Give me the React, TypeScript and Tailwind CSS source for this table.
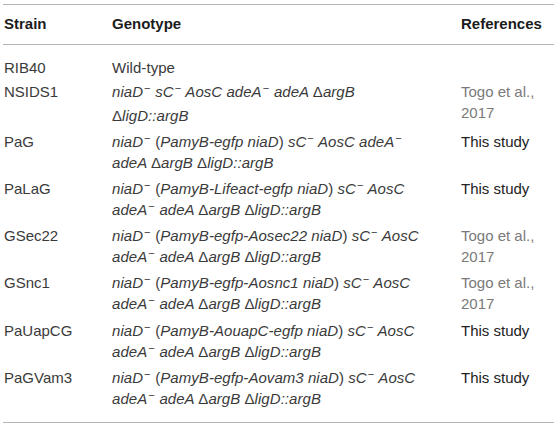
import React from 'react';

const D = () => <span className="not-italic">Δ</span>;
const M = () => (
  <span className="inline-block align-top leading-none text-[11px] not-italic mt-[2px] ml-[1px] mr-[0.5px]">−</span>
);

type Row = {
  strain: string;
  lines: React.ReactNode[];
  ref: 'togo' | 'study' | null;
};

const rows: Row[] = [
  { strain: 'RIB40', lines: [<span className="not-italic">Wild-type</span>], ref: null },
  {
    strain: 'NSIDS1',
    lines: [
      <>niaD<M /> sC<M /> AosC adeA<M /> adeA <D />argB</>,
      <><D />ligD::argB</>,
    ],
    ref: 'togo',
  },
  {
    strain: 'PaG',
    lines: [
      <>niaD<M /> <span className="not-italic">(</span>PamyB-egfp niaD<span className="not-italic">)</span> sC<M /> AosC adeA<M /></>,
      <>adeA <D />argB <D />ligD::argB</>,
    ],
    ref: 'study',
  },
  {
    strain: 'PaLaG',
    lines: [
      <>niaD<M /> <span className="not-italic">(</span>PamyB-Lifeact-egfp niaD<span className="not-italic">)</span> sC<M /> AosC</>,
      <>adeA<M /> adeA <D />argB <D />ligD::argB</>,
    ],
    ref: 'study',
  },
  {
    strain: 'GSec22',
    lines: [
      <>niaD<M /> <span className="not-italic">(</span>PamyB-egfp-Aosec22 niaD<span className="not-italic">)</span> sC<M /> AosC</>,
      <>adeA<M /> adeA <D />argB <D />ligD::argB</>,
    ],
    ref: 'togo',
  },
  {
    strain: 'GSnc1',
    lines: [
      <>niaD<M /> <span className="not-italic">(</span>PamyB-egfp-Aosnc1 niaD<span className="not-italic">)</span> sC<M /> AosC</>,
      <>adeA<M /> adeA <D />argB <D />ligD::argB</>,
    ],
    ref: 'togo',
  },
  {
    strain: 'PaUapCG',
    lines: [
      <>niaD<M /> <span className="not-italic">(</span>PamyB-AouapC-egfp niaD<span className="not-italic">)</span> sC<M /> AosC</>,
      <>adeA<M /> adeA <D />argB <D />ligD::argB</>,
    ],
    ref: 'study',
  },
  {
    strain: 'PaGVam3',
    lines: [
      <>niaD<M /> <span className="not-italic">(</span>PamyB-egfp-Aovam3 niaD<span className="not-italic">)</span> sC<M /> AosC</>,
      <>adeA<M /> adeA <D />argB <D />ligD::argB</>,
    ],
    ref: 'study',
  },
];

export default function App() {
  return (
    <div className="w-[559px] h-[427px] bg-white pt-[4px] pl-[3px] font-['Liberation_Sans',Arial,sans-serif] text-[15px]">
      <div className="w-[551px] border-t border-b border-[#b4b4b4]">
        {/* header */}
        <div className="grid grid-cols-[108px_349px_1fr] h-[40px] items-center border-b border-[#b4b4b4] font-bold text-[#1c1c1c] pl-[1px]">
          <div>Strain</div>
          <div>Genotype</div>
          <div>References</div>
        </div>

        {/* body */}
        <div className="pt-[12px] pb-[12px] text-[#3a3a3a]">
          {rows.map((row, idx) => (
            <div
              key={row.strain}
              className={
                idx === 0
                  ? 'grid grid-cols-[108px_349px_1fr] leading-[21px] pl-[1px]'
                  : idx >= 6
                  ? 'grid grid-cols-[108px_349px_1fr] pt-[3.5px] pb-[1.5px] leading-[21px] pl-[1px]'
                  : 'grid grid-cols-[108px_349px_1fr] py-[2.5px] leading-[21px] pl-[1px]'
              }
            >
              <div>{row.strain}</div>
              <div className="italic tracking-[0.05px]">
                {row.lines.map((l, i) => (
                  <div key={i} className={idx === 1 && i === 1 ? 'mt-[3px]' : ''}>
                    {l}
                  </div>
                ))}
              </div>
              <div>
                {row.ref === 'togo' && (
                  <div className="text-[#7a7a7a]">
                    <div>Togo et al.,</div>
                    <div>2017</div>
                  </div>
                )}
                {row.ref === 'study' && <div className="text-[#222]">This study</div>}
              </div>
            </div>
          ))}
        </div>
      </div>
    </div>
  );
}
